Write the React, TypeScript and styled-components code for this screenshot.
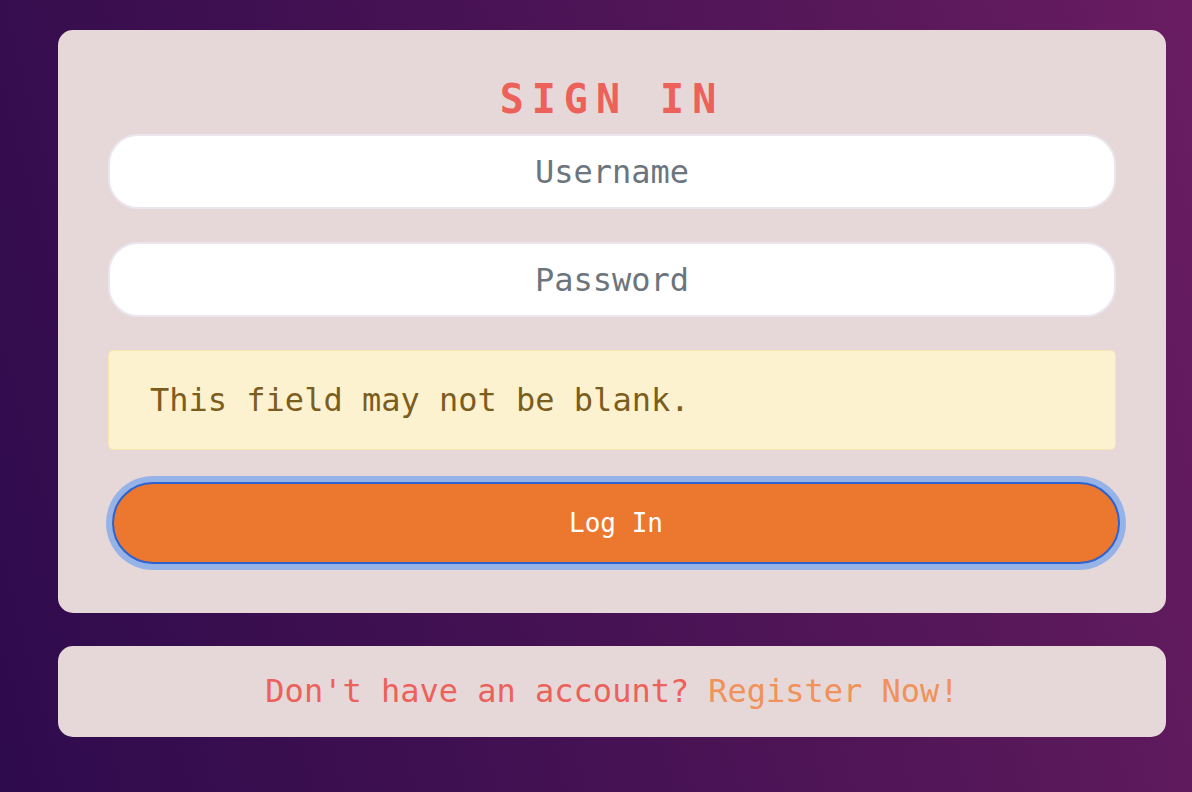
import React from "react";
import styled, { createGlobalStyle } from "styled-components";

const Global = createGlobalStyle`
  html, body { margin: 0; padding: 0; }
  body {
    min-height: 792px;
    background: linear-gradient(75deg, #2e0b4d 0%, #431152 40%, #5e1a5c 85%, #6a1c62 100%);
    font-family: "DejaVu Sans Mono", "Liberation Mono", monospace;
  }
`;

const Page = styled.main`
  box-sizing: border-box;
  min-height: 792px;
  padding: 30px 26px 0 58px;
  display: flex;
  flex-direction: column;
  gap: 33px;
`;

const Card = styled.section`
  background: #e6d8d8;
  border-radius: 15px;
  box-sizing: border-box;
  width: 1108px;
`;

const LoginCard = styled(Card)`
  padding: 46px 50px 49px;
  display: flex;
  flex-direction: column;
`;

const Title = styled.h1`
  margin: 0 0 12px;
  text-align: center;
  font-size: 40px;
  line-height: 46px;
  font-weight: 700;
  letter-spacing: 8px;
  color: #ec615a;
`;

const Input = styled.input`
  box-sizing: border-box;
  width: 100%;
  height: 75px;
  border: 2px solid #ebe5ee;
  border-radius: 30px;
  background: #ffffff;
  font-family: inherit;
  font-size: 32px;
  text-align: center;
  color: #333;
  outline: none;
  margin-bottom: 33px;
  &::placeholder { color: #6c757d; }
`;

const Alert = styled.div`
  box-sizing: border-box;
  height: 100px;
  display: flex;
  align-items: center;
  padding: 0 41px;
  background: #fdf2d0;
  border: 1px solid #f8e6b0;
  border-radius: 5px;
  color: #7b5d1e;
  font-size: 32px;
  margin-bottom: 32px;
`;

const Button = styled.button`
  box-sizing: border-box;
  width: 100%;
  height: 82px;
  margin: 0 -4px 0 4px;
  border: 2px solid #2d62cf;
  border-radius: 41px;
  background: #ec772f;
  color: #ffffff;
  font-family: inherit;
  font-size: 26px;
  box-shadow: 0 0 0 6px #96b3e8;
  cursor: pointer;
`;

const FooterCard = styled(Card)`
  height: 91px;
  display: flex;
  align-items: center;
  justify-content: center;
  font-size: 32px;
  color: #ec615a;
  padding-bottom: 2px;
`;

const RegisterLink = styled.a`
  color: #f0925a;
  text-decoration: none;
  margin-left: 19px;
`;

export default function App() {
  return (
    <>
      <Global />
      <Page>
        <LoginCard>
          <Title>SIGN IN</Title>
          <Input placeholder="Username" />
          <Input type="password" placeholder="Password" />
          <Alert>This field may not be blank.</Alert>
          <Button>Log In</Button>
        </LoginCard>
        <FooterCard>
          Don't have an account?<RegisterLink href="#">Register Now!</RegisterLink>
        </FooterCard>
      </Page>
    </>
  );
}
